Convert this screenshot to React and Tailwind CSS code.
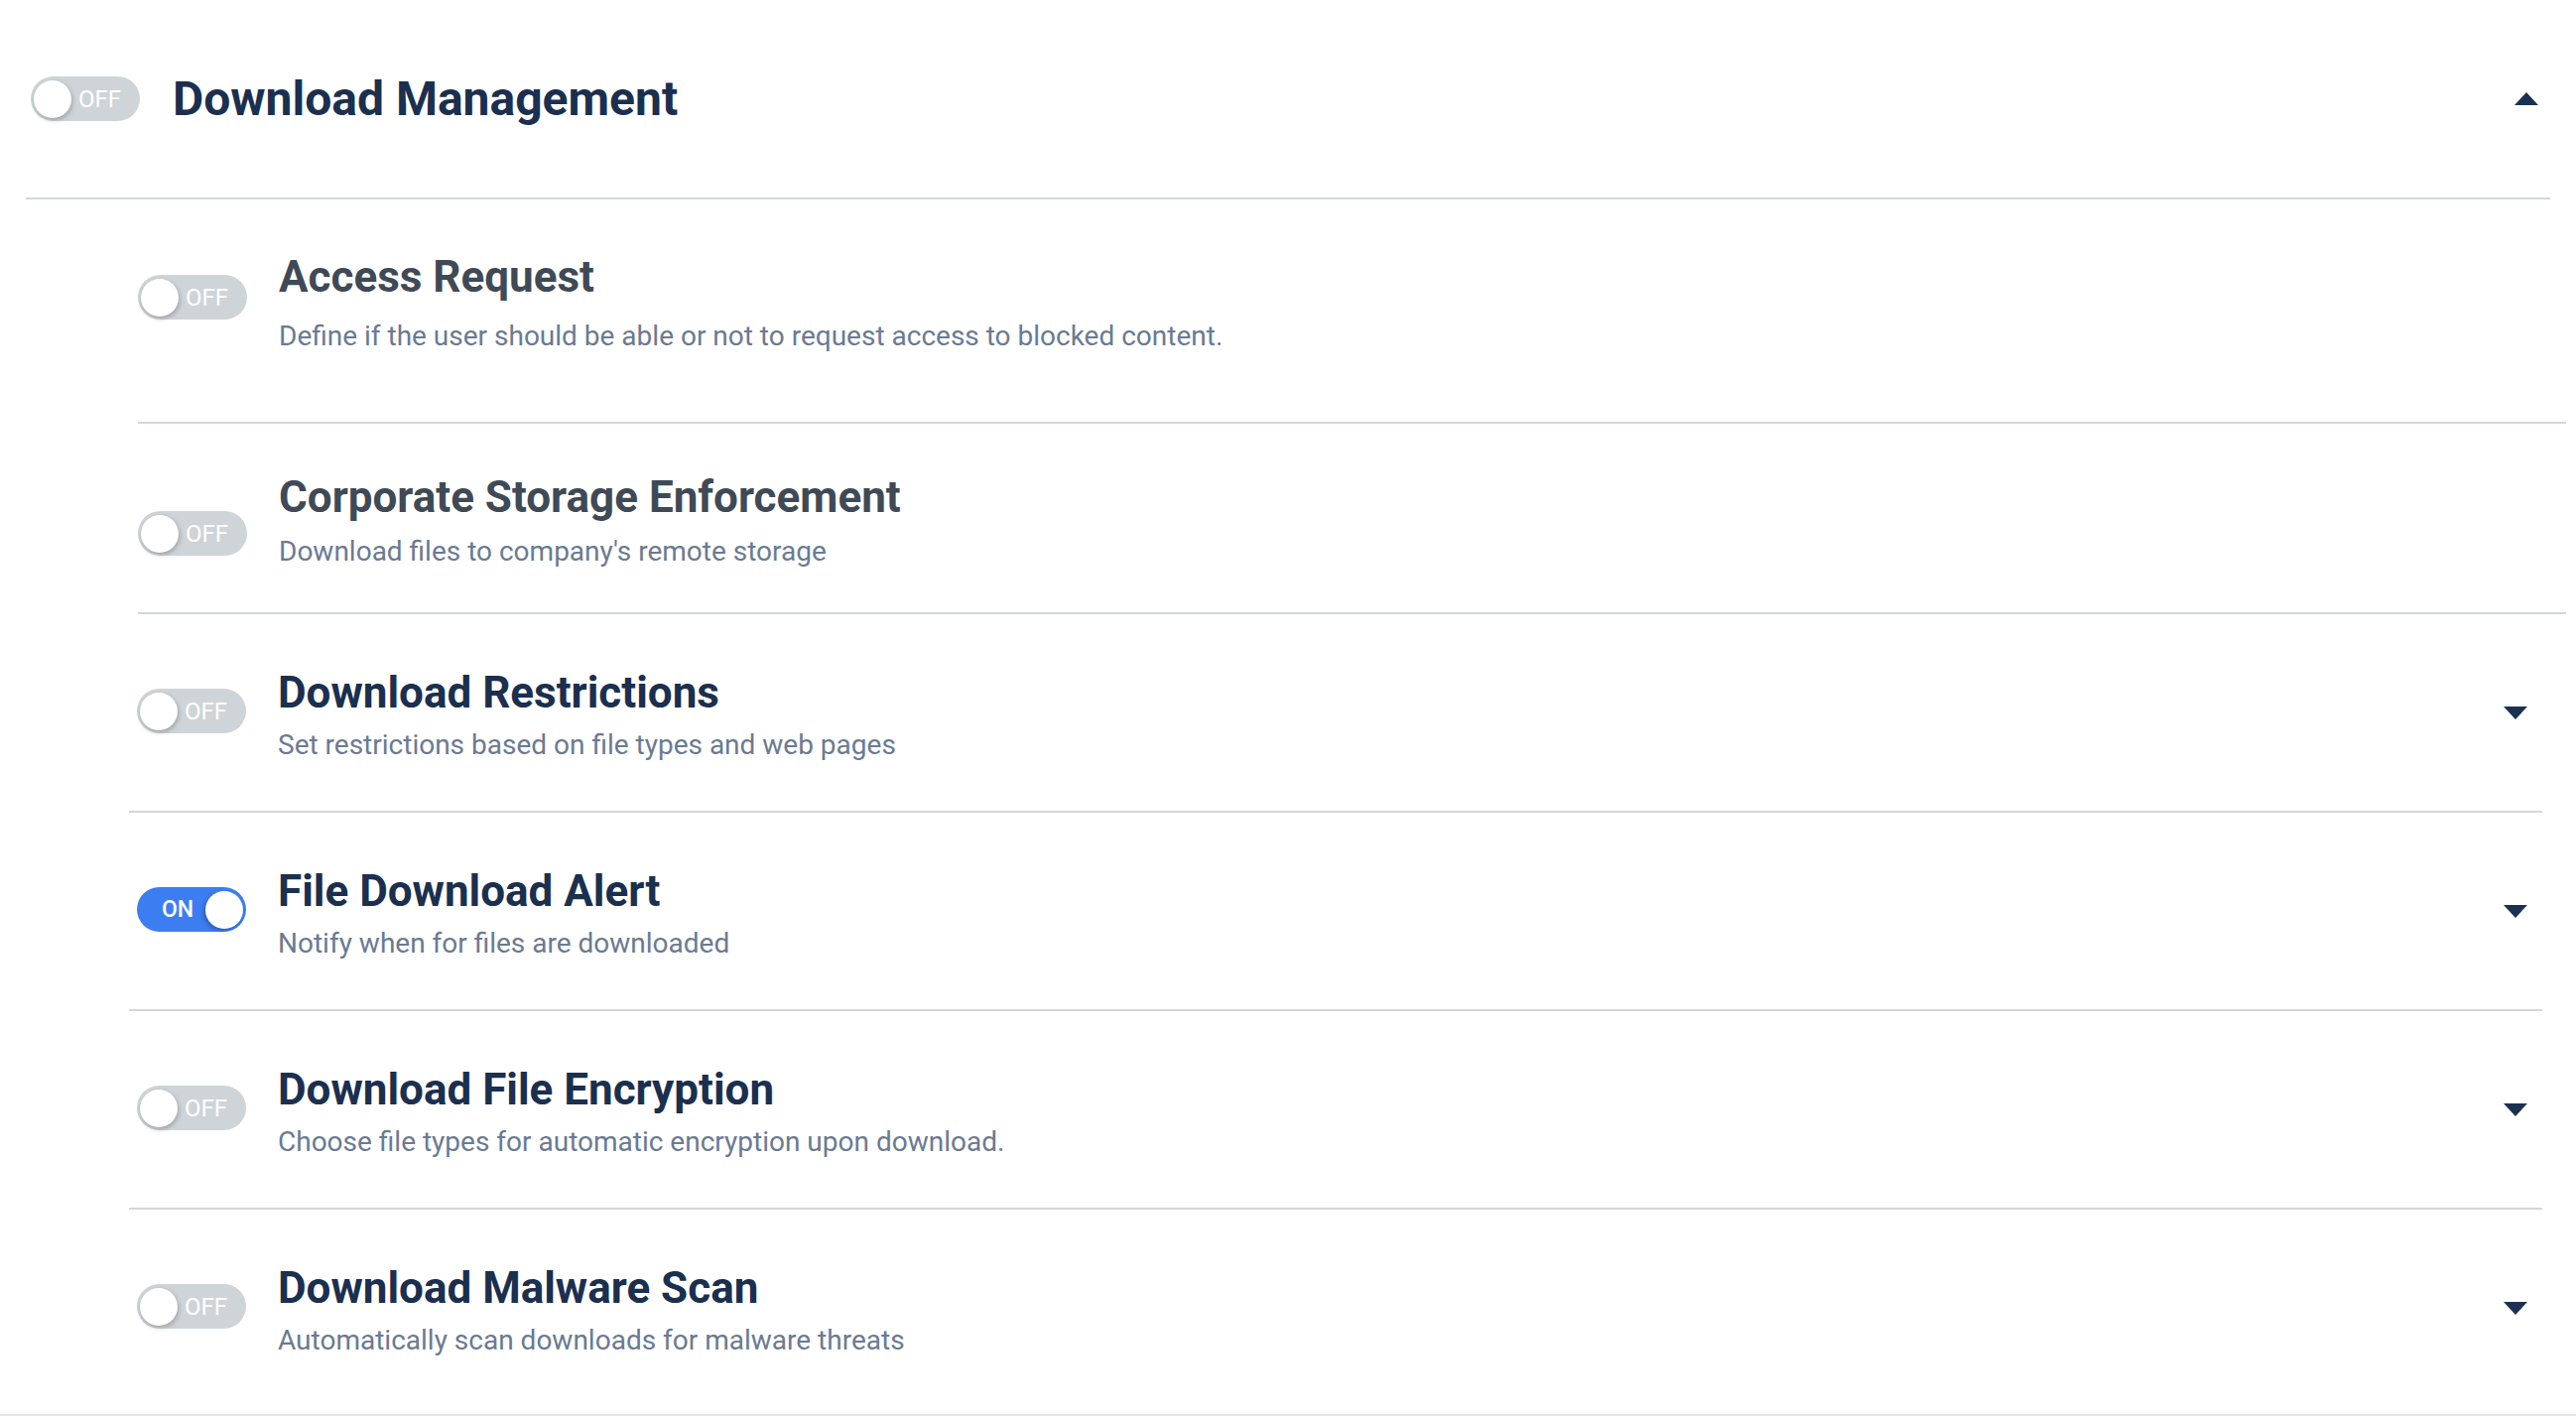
import React from "react";

const settings = [
  {
    title: "Download Restrictions",
    desc: "Set restrictions based on file types and web pages",
    on: false,
  },
  {
    title: "File Download Alert",
    desc: "Notify when for files are downloaded",
    on: true,
  },
  {
    title: "Download File Encryption",
    desc: "Choose file types for automatic encryption upon download.",
    on: false,
  },
  {
    title: "Download Malware Scan",
    desc: "Automatically scan downloads for malware threats",
    on: false,
  },
];

function Toggle({ on }) {
  if (on) {
    return (
      <div className="flex items-center justify-between w-[110px] h-[45px] rounded-full bg-[#3c7ef2] pl-[25px] pr-[3px] shrink-0">
        <span className="text-[23px] font-medium text-white leading-none">ON</span>
        <span className="w-[38px] h-[38px] rounded-full bg-white shadow-[-2px_2px_5px_rgba(0,0,0,0.25)]" />
      </div>
    );
  }
  return (
    <div className="flex items-center w-[110px] h-[45px] rounded-full bg-[#cfd4d8] pl-[3px] shrink-0">
      <span className="w-[38px] h-[38px] rounded-full bg-white shadow-[1px_2px_5px_rgba(0,0,0,0.25)]" />
      <span className="ml-[7px] text-[24px] text-white leading-none">OFF</span>
    </div>
  );
}

function Caret({ up }) {
  return (
    <svg width="24" height="13" viewBox="0 0 24 13" className="block">
      {up ? (
        <path d="M12 0 L24 13 L0 13 Z" fill="#1b3152" />
      ) : (
        <path d="M0 0 L24 0 L12 13 Z" fill="#1b3152" />
      )}
    </svg>
  );
}

export default function App() {
  return (
    <div
      className="min-h-screen bg-white"
      style={{ fontFamily: "Roboto, 'Noto Sans', sans-serif" }}
    >
      {/* section header */}
      <div className="mx-[26px] h-[201px] flex items-center border-b-2 border-[#d3d7db] pl-[5px] pr-[12px]">
        <Toggle on={false} />
        <h1 className="ml-[33px] text-[48px] leading-[56px] font-bold text-[#1b2f4f]">
          Download Management
        </h1>
        <div className="ml-auto">
          <Caret up />
        </div>
      </div>

      {/* simple switches */}
      <div className="ml-[139px] mr-[10px]">
        <div className="flex items-start h-[226px] pt-[52px] border-b-2 border-[#d3d7db]">
          <div className="mt-[24px]">
            <Toggle on={false} />
          </div>
          <div className="ml-[32px]">
            <div className="text-[44px] leading-[52px] font-bold text-[#3f4a56]">
              Access Request
            </div>
            <div className="mt-[16px] text-[28px] leading-[36px] text-[#6a7a92]">
              Define if the user should be able or not to request access to blocked content.
            </div>
          </div>
        </div>
        <div className="flex items-start h-[192px] pt-[48px] border-b-2 border-[#d3d7db]">
          <div className="mt-[40px]">
            <Toggle on={false} />
          </div>
          <div className="ml-[32px]">
            <div className="text-[44px] leading-[52px] font-bold text-[#3f4a56]">
              Corporate Storage Enforcement
            </div>
            <div className="mt-[11px] text-[28px] leading-[36px] text-[#6a7a92]">
              Download files to company's remote storage
            </div>
          </div>
        </div>
      </div>

      {/* expandable settings */}
      <div className="ml-[130px] mr-[34px]">
        {settings.map((s, i) => (
          <div
            key={s.title}
            className={
              i === settings.length - 1
                ? "flex items-start h-[206px] pt-[53px] pl-[8px] pr-[15px]"
                : "flex items-start h-[200px] pt-[53px] pl-[8px] pr-[15px] border-b-2 border-[#d3d7db]"
            }
          >
            <div className="mt-[22px]">
              <Toggle on={s.on} />
            </div>
            <div className="ml-[32px]">
              <div className="text-[44px] leading-[52px] font-bold text-[#1b2f4f]">
                {s.title}
              </div>
              <div className="mt-[9px] text-[28px] leading-[36px] text-[#6a7a92]">
                {s.desc}
              </div>
            </div>
            <div className="ml-auto mt-[40px]">
              <Caret />
            </div>
          </div>
        ))}
      </div>
      <div className="border-t-2 border-[#e5e9ec]" />
    </div>
  );
}
